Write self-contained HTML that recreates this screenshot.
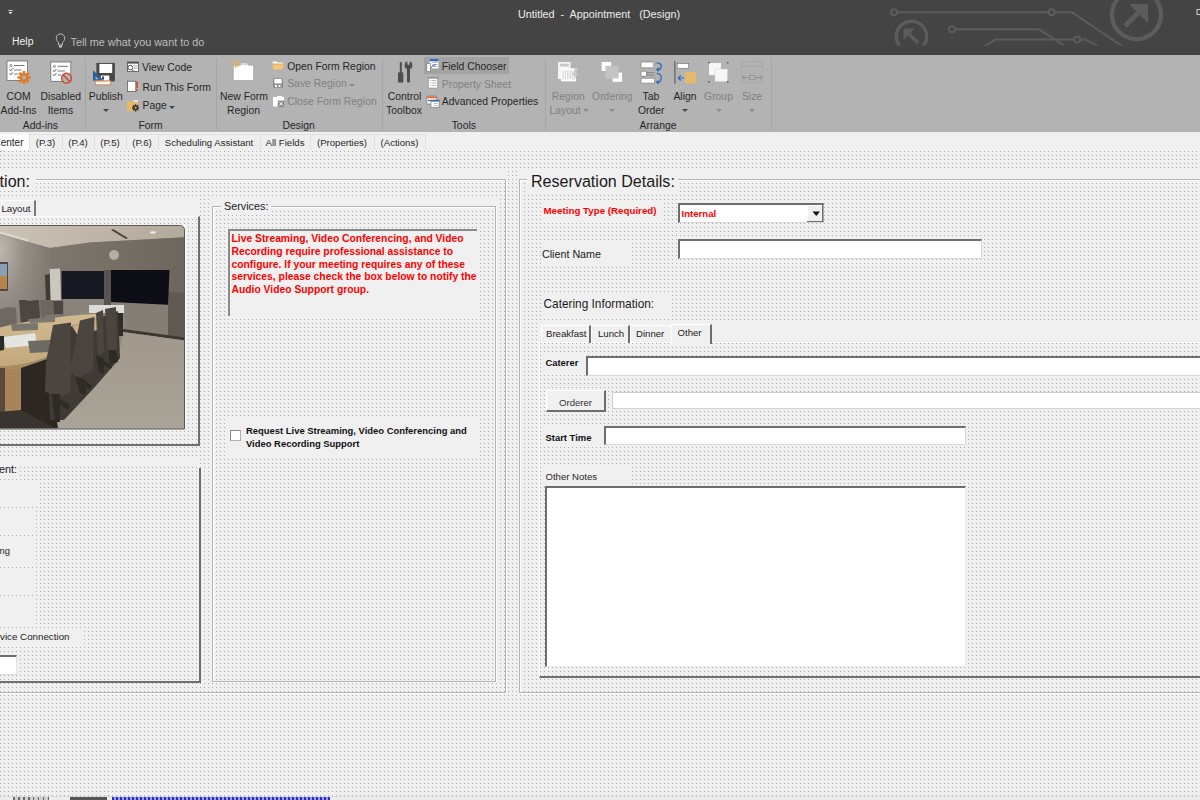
<!DOCTYPE html>
<html><head><meta charset="utf-8">
<style>
*{margin:0;padding:0;box-sizing:border-box}
html,body{width:1200px;height:800px;overflow:hidden;background:#f0f0f0;font-family:"Liberation Sans",sans-serif;position:relative}
.a{position:absolute}
.t{position:absolute;white-space:nowrap;line-height:1}
.dots{background-color:#f0f0f0;background-image:linear-gradient(90deg,#f0f0f0 3px,transparent 3px),linear-gradient(#f0f0f0 3px,#acacac 3px);background-size:4px 4px}
.solid{background:#f0f0f0}
.etch{border:1px solid #b4b4b4;box-shadow:1px 1px 0 #fff,inset 1px 1px 0 #fff}
.sunk{background:#fff;border-top:2px solid #6e6e6e;border-left:2px solid #6e6e6e;border-right:1px solid #e3e3e3;border-bottom:1px solid #e3e3e3}
.rb{color:#262626;font-size:10.4px}
.rbd{color:#808080;font-size:10.4px}
.sep{position:absolute;top:58px;width:1px;height:72px;background:#a5a5a5}
</style></head><body>
<div class="a" style="left:0;top:0;width:1200px;height:55px;background:#444"></div>
<svg class="a" style="left:0;top:0" width="1200" height="55" viewBox="0 0 1200 55">
<defs><clipPath id="cc"><rect x="0" y="0" width="1200" height="45.6"/></clipPath></defs>
<g clip-path="url(#cc)" fill="none" stroke="#5c5c5c" stroke-width="2">
<circle cx="894" cy="12.3" r="3"/>
<path d="M897 12.3H1048.5"/>
<circle cx="1051.5" cy="12.3" r="3"/>
<path d="M1054.5 12.3H1072L1122 46"/>
<circle cx="952" cy="29.3" r="3"/>
<path d="M955 29.3H1039L1065 46"/>
<path d="M985 46L995.5 39.5H1074.3"/>
<circle cx="1077.3" cy="39.5" r="3"/>
<path d="M1080.3 39.5H1085L1098 46"/>
<circle cx="911.5" cy="36.5" r="15.2" stroke-width="3.4"/>
<path d="M918 43L908 33" stroke-width="3.6"/><path d="M903.5 28.5H915L903.5 40Z" fill="#5c5c5c" stroke="none"/>
<circle cx="1136.5" cy="14.7" r="24.5" stroke-width="4.3"/>
<path d="M1125 26L1141 10" stroke-width="5"/><path d="M1129 4H1148V23Z" fill="#5c5c5c" stroke="none"/>
</g>
<rect x="1197" y="9.5" width="4" height="5" fill="none" stroke="#e0e0e0" stroke-width="0.9"/>
</svg>

<div class="t" style="left:518px;top:8.5px;font-size:10.8px;color:#ededed">Untitled&nbsp; -&nbsp; Appointment &nbsp; (Design)</div>
<div class="t" style="left:12px;top:37px;font-size:10.45px;color:#f2f2f2">Help</div>
<div class="t" style="left:70.5px;top:37px;font-size:10.85px;color:#bdbdbd">Tell me what you want to do</div>
<div class="a" style="left:0;top:55px;width:1200px;height:77px;background:#b3b3b3"></div>
<div class="t rb" style="left:-26.5px;top:91.7px;width:90px;text-align:center;">COM</div>
<div class="t rb" style="left:-26.5px;top:106.2px;width:90px;text-align:center;">Add-Ins</div>
<div class="t rb" style="left:15.8px;top:91.7px;width:90px;text-align:center;">Disabled</div>
<div class="t rb" style="left:15.4px;top:106.2px;width:90px;text-align:center;">Items</div>
<div class="t rb" style="left:60.8px;top:91.7px;width:90px;text-align:center;">Publish</div>
<svg class="a" style="left:102.5px;top:108.5px" width="6" height="4"><path d="M0 0H6L3 3Z" fill="#444"/></svg>
<div class="t rb" style="left:199.0px;top:91.7px;width:90px;text-align:center;">New Form</div>
<div class="t rb" style="left:198.5px;top:106.2px;width:90px;text-align:center;">Region</div>
<div class="t rb" style="left:359.5px;top:91.7px;width:90px;text-align:center;">Control</div>
<div class="t rb" style="left:359.0px;top:106.2px;width:90px;text-align:center;">Toolbox</div>
<div class="t rbd" style="left:523.3px;top:91.7px;width:90px;text-align:center;">Region</div>
<div class="t rbd" style="left:520.0px;top:106.2px;width:90px;text-align:center;">Layout</div>
<svg class="a" style="left:582.5px;top:108.5px" width="6" height="4"><path d="M0 0H6L3 3Z" fill="#8a8a8a"/></svg>
<div class="t rbd" style="left:567.3px;top:91.7px;width:90px;text-align:center;">Ordering</div>
<svg class="a" style="left:609px;top:108.5px" width="6" height="4"><path d="M0 0H6L3 3Z" fill="#8a8a8a"/></svg>
<div class="t rb" style="left:606.0px;top:91.7px;width:90px;text-align:center;">Tab</div>
<div class="t rb" style="left:606.3px;top:106.2px;width:90px;text-align:center;">Order</div>
<div class="t rb" style="left:640.0px;top:91.7px;width:90px;text-align:center;">Align</div>
<svg class="a" style="left:681.8px;top:108.5px" width="6" height="4"><path d="M0 0H6L3 3Z" fill="#444"/></svg>
<div class="t rbd" style="left:673.5px;top:91.7px;width:90px;text-align:center;">Group</div>
<svg class="a" style="left:715.5px;top:108.5px" width="6" height="4"><path d="M0 0H6L3 3Z" fill="#8a8a8a"/></svg>
<div class="t rbd" style="left:707.0px;top:91.7px;width:90px;text-align:center;">Size</div>
<svg class="a" style="left:749px;top:108.5px" width="6" height="4"><path d="M0 0H6L3 3Z" fill="#8a8a8a"/></svg>
<div class="t rb" style="left:-4.6px;top:121.0px;width:90px;text-align:center;">Add-ins</div>
<div class="t rb" style="left:105.5px;top:121.0px;width:90px;text-align:center;">Form</div>
<div class="t rb" style="left:253.7px;top:121.0px;width:90px;text-align:center;">Design</div>
<div class="t rb" style="left:418.8px;top:121.0px;width:90px;text-align:center;">Tools</div>
<div class="t rb" style="left:613.0px;top:121.0px;width:90px;text-align:center;">Arrange</div>
<div class="sep" style="left:85px"></div>
<div class="sep" style="left:216px"></div>
<div class="sep" style="left:382px"></div>
<div class="sep" style="left:545px"></div>
<div class="sep" style="left:771px"></div>
<div class="a" style="left:424px;top:57px;width:85px;height:17px;background:#a2a2a2"></div>
<div class="t rb" style="left:142.0px;top:63.0px;">View Code</div>
<div class="t rb" style="left:142.5px;top:82.7px;">Run This Form</div>
<div class="t rb" style="left:142.5px;top:101.2px;">Page</div>
<svg class="a" style="left:168.5px;top:105.5px" width="6" height="4"><path d="M0 0H6L3 3Z" fill="#444"/></svg>
<div class="t rb" style="left:287.2px;top:61.5px;">Open Form Region</div>
<div class="t rbd" style="left:287.2px;top:78.9px;">Save Region</div>
<svg class="a" style="left:348.5px;top:83.5px" width="6" height="4"><path d="M0 0H6L3 3Z" fill="#8a8a8a"/></svg>
<div class="t rbd" style="left:287.2px;top:97.0px;">Close Form Region</div>
<div class="t rb" style="left:441.8px;top:61.7px;">Field Chooser</div>
<div class="t rbd" style="left:441.8px;top:79.5px;">Property Sheet</div>
<div class="t rb" style="left:441.8px;top:97.2px;">Advanced Properties</div>
<svg class="a" style="left:0;top:0" width="800" height="135" viewBox="0 0 800 135">
<!-- COM Add-Ins -->
<rect x="7" y="61" width="20.5" height="19.5" fill="#fff" stroke="#6a6a6a" stroke-width="0.8"/>
<circle cx="11" cy="65.5" r="1" fill="none" stroke="#555" stroke-width="0.7"/>
<path d="M14 65.5H24.5M14 70H21.5M14 74H18" stroke="#555" stroke-width="0.8"/>
<path d="M9.5 69.5l1.2 1.4 2.2-2.6M9.5 73.5l1.2 1.4 2.2-2.6" stroke="#444" stroke-width="0.9" fill="none"/>
<g transform="translate(24,77.5)">
<circle r="4.6" fill="#e07a2a"/>
<path d="M-1.3-6.6h2.6v2.4h-2.6zM-1.3 4.2h2.6v2.4h-2.6zM-6.6-1.3h2.4v2.6h-2.4zM4.2-1.3h2.4v2.6h-2.4z" fill="#e07a2a"/>
<path d="M-1.3-6.6h2.6v2.4h-2.6zM-1.3 4.2h2.6v2.4h-2.6zM-6.6-1.3h2.4v2.6h-2.4zM4.2-1.3h2.4v2.6h-2.4z" fill="#e07a2a" transform="rotate(45)"/>
<circle r="2" fill="#b3b3b3"/>
</g>
<!-- Disabled Items -->
<rect x="50.8" y="62" width="20" height="19.3" fill="#fff" stroke="#6a6a6a" stroke-width="0.8"/>
<circle cx="54.5" cy="66.3" r="1" fill="none" stroke="#555" stroke-width="0.7"/>
<path d="M57.5 66.3H68M57.5 71H65M57.5 75H61" stroke="#555" stroke-width="0.8"/>
<path d="M53 70.3l1.2 1.4 2.2-2.6M53 74.3l1.2 1.4 2.2-2.6" stroke="#444" stroke-width="0.9" fill="none"/>
<circle cx="66.5" cy="78.2" r="4.9" fill="#b3b3b3" stroke="#d4452b" stroke-width="1.4"/>
<path d="M63.3 75l6.4 6.4" stroke="#d4452b" stroke-width="1.4"/>
<!-- Publish -->
<rect x="96.4" y="62.9" width="18.5" height="18.5" fill="#474747"/>
<rect x="99.4" y="63.9" width="12.8" height="9.1" fill="#fff"/>
<rect x="100.8" y="75.5" width="8.5" height="5.9" fill="#fff"/>
<rect x="102" y="76.5" width="2" height="3" fill="#474747"/>
<path d="M93 70.3V80.8H104Z" fill="#2b5f9e"/>
<path d="M95.5 76.2V79.2H98.5Z" fill="#b3b3b3"/>
<rect x="95.3" y="80.8" width="15" height="4" fill="#fff" stroke="#c9874a" stroke-width="0.9"/>
<path d="M97 81v1.5M99 81v1.5M101 81v1.5M103 81v1.5M105 81v1.5M107 81v1.5" stroke="#e07a2a" stroke-width="0.7"/>
<!-- View Code -->
<rect x="127.5" y="62" width="11" height="9.5" fill="#fff" stroke="#505050" stroke-width="0.8"/>
<rect x="127.5" y="62" width="11" height="1.6" fill="#505050"/>
<path d="M133.5 66H137.5M133.5 68H137.5" stroke="#888" stroke-width="0.7"/>
<circle cx="130.3" cy="67.6" r="2.3" fill="#fff" stroke="#404040" stroke-width="0.9"/>
<path d="M131.8 69.3l1.8 2" stroke="#404040" stroke-width="1"/>
<!-- Run This Form -->
<rect x="127.4" y="81.2" width="8.4" height="10.2" fill="#fff" stroke="#606060" stroke-width="0.8"/>
<rect x="136.2" y="81.5" width="1.6" height="6.5" fill="#d4452b"/>
<rect x="136.2" y="89.2" width="1.6" height="1.8" fill="#d4452b"/>
<!-- Page -->
<path d="M127 101.2h4l1 1h6v8.5h-11z" fill="#e8b865"/>
<rect x="133.5" y="100.3" width="4.5" height="1.3" fill="#fff"/>
<g transform="translate(135.6,107.8)"><circle r="2.4" fill="#333"/><path d="M-0.7-3.6h1.4v7.2h-1.4zM-3.6-0.7h7.2v1.4h-7.2z" fill="#333"/><path d="M-0.7-3.6h1.4v7.2h-1.4zM-3.6-0.7h7.2v1.4h-7.2z" fill="#333" transform="rotate(45)"/><circle r="1" fill="#e8b865"/></g>
<!-- New Form Region -->
<path d="M233.3 65.2h7l1.2-2.2h5.5l1.5 2.2h5.1v15.3h-20.3z" fill="#fff" stroke="#8f8f8f" stroke-width="0.5"/>
<path d="M240.5 65.2l1-2h5.5l1.5 2z" fill="#d9d9d9"/>
<g transform="translate(235.6,64)" stroke="#e8b35a" stroke-width="1.1"><path d="M0-4V4M-4 0H4M-2.8-2.8L2.8 2.8M-2.8 2.8L2.8-2.8"/></g>
<circle cx="235.6" cy="64" r="1.3" fill="#b3b3b3"/>
<!-- Open Form Region -->
<path d="M272.8 61.5h3.5l1 1h5.5v2h-10z" fill="#fff"/>
<path d="M272.8 63.5h11l-1.5 6h-9.5z" fill="#e8b565"/>
<path d="M273.5 65h10.8l-2 4.5h-9z" fill="#f0c77d"/>
<!-- Save Region (disabled) -->
<rect x="273" y="78.3" width="10" height="9.4" fill="#8a8a8a"/>
<rect x="274.3" y="79" width="7.4" height="4.5" fill="#fff"/>
<rect x="275" y="85" width="2" height="2" fill="#fff"/><rect x="278.5" y="85" width="2" height="2" fill="#fff"/>
<!-- Close Form Region (disabled) -->
<path d="M273 97h3.5l1-1h4l1 1h1.5v9.5H273z" fill="#fff"/>
<rect x="277.8" y="100.6" width="6.3" height="6.5" fill="#8a8a8a"/>
<path d="M279.3 102l3.3 3.6M282.6 102l-3.3 3.6" stroke="#fff" stroke-width="0.9"/>
<!-- Control Toolbox -->
<g fill="#4d4d4d">
<rect x="399.8" y="62" width="2" height="11" rx="0.8"/>
<rect x="398" y="72.3" width="5.3" height="10.3" rx="1.2"/>
<circle cx="408.5" cy="65.2" r="3.9"/><rect x="407" y="66" width="3" height="16.6" rx="1.4"/>
</g>
<path d="M407.3 60.5h2.4v3.8l-1.2 .8-1.2-.8z" fill="#b3b3b3"/>
<!-- Field Chooser -->
<rect x="429.5" y="59" width="9" height="9.5" fill="#fff"/>
<rect x="429.5" y="59" width="9" height="2.3" fill="#2e6bb5"/>
<path d="M432.5 62.5h5M432.5 64.5h5M432.5 66.5h5" stroke="#888" stroke-width="0.6"/>
<rect x="426.8" y="63.5" width="3.6" height="8" fill="#fff" stroke="#707070" stroke-width="0.6"/>
<path d="M430.5 68.3c1.5-2.5 3-3.5 5-3.5" stroke="#2e6bb5" stroke-width="1" fill="none"/>
<!-- Property Sheet (disabled) -->
<rect x="428.2" y="77.3" width="9.6" height="10.8" fill="#fff" stroke="#8a8a8a" stroke-width="0.7"/>
<rect x="428.2" y="77.3" width="9.6" height="1.3" fill="#8a8a8a"/>
<path d="M429.8 80.6h.9M429.8 83h.9M429.8 85.4h.9M431.6 80.6h5M431.6 83h5M431.6 85.4h5" stroke="#9a9a9a" stroke-width="0.7"/>
<!-- Advanced Properties -->
<rect x="427" y="96" width="9.5" height="8" fill="#fff" stroke="#707070" stroke-width="0.6"/>
<rect x="427" y="96.3" width="9.5" height="2" fill="#e06a2a"/>
<path d="M428 100.5h3" stroke="#2e6bb5" stroke-width="1.2"/>
<rect x="431" y="100" width="8.2" height="7.4" fill="#fff" stroke="#707070" stroke-width="0.6"/>
<rect x="431" y="100" width="8.2" height="1.6" fill="#2e6bb5"/>
<path d="M434 103.5h4M434 105.5h4" stroke="#999" stroke-width="0.6"/>
<!-- Region Layout (disabled) -->
<rect x="558" y="62" width="12.5" height="17" fill="#f4f4f4"/>
<rect x="559.8" y="63.8" width="9" height="2.6" fill="#c8c8c8"/>
<rect x="561" y="68.3" width="15" height="13" fill="#fff"/>
<path d="M563 70.3v9M565.3 70.3v9M567.8 70.3v9M570 70.3v9M572.2 70.3v9" stroke="#bdbdbd" stroke-width="0.8"/>
<path d="M575 68l3.5 0-2.8 5h2.8l-5.5 8.5 1.5-6h-2.2z" fill="#c9c9c9"/>
<!-- Ordering (disabled) -->
<rect x="601.7" y="62" width="9.5" height="9" fill="#fff"/>
<rect x="612.6" y="72.6" width="9.5" height="9.2" fill="#fff"/>
<rect x="605.4" y="65.8" width="13.2" height="12.6" fill="#c4c4c4"/>
<!-- Tab Order -->
<rect x="641" y="62" width="13.5" height="5.8" rx="0.8" fill="#fff" stroke="#6a6a6a" stroke-width="0.6"/>
<rect x="652.3" y="62.6" width="1.6" height="4.6" fill="#b9d5ef"/>
<rect x="641" y="71.3" width="5.5" height="5" rx="0.8" fill="#fff" stroke="#6a6a6a" stroke-width="0.6"/>
<path d="M646.5 72.6h8M646.5 75h8" stroke="#7a7a7a" stroke-width="0.8"/>
<rect x="641" y="78.2" width="13.5" height="5" rx="0.8" fill="#fff" stroke="#6a6a6a" stroke-width="0.6"/>
<path d="M656.5 62.8Q661.2 62.8 661.2 66.2Q661.2 69.3 658.5 69.6" stroke="#2e6bb5" stroke-width="1.3" fill="none"/>
<path d="M655.5 69.6L658.8 67.2V72Z" fill="#2e6bb5"/>
<path d="M656.5 73.3Q661.2 73.3 661.2 77.5Q661.2 81.8 658.5 82.2" stroke="#2e6bb5" stroke-width="1.3" fill="none"/>
<path d="M655.5 82.2L658.8 79.8V84.6Z" fill="#2e6bb5"/>
<!-- Align -->
<rect x="674.2" y="61" width="1.3" height="22.7" fill="#666"/>
<rect x="677.2" y="63.5" width="11.5" height="5" fill="#fff" stroke="#6a6a6a" stroke-width="0.6"/>
<rect x="685" y="72" width="11" height="11.5" fill="#e5b86a"/>
<path d="M684 78H678.3M680.8 75.5L678.3 78l2.5 2.5" stroke="#2e6bb5" stroke-width="1.2" fill="none"/>
<!-- Group (disabled) -->
<rect x="709" y="63" width="12" height="12" fill="#f6f6f6"/>
<rect x="715" y="69" width="12.5" height="12.5" fill="#f6f6f6" stroke="#c8c8c8" stroke-width="0.4"/>
<rect x="708.3" y="62" width="1.5" height="1.5" fill="#555"/><rect x="727" y="62" width="1.5" height="1.5" fill="#555"/>
<rect x="708.3" y="81" width="1.5" height="1.5" fill="#555"/><rect x="727" y="81" width="1.5" height="1.5" fill="#555"/>
<!-- Size (disabled) -->
<rect x="741.5" y="61.5" width="21" height="21" fill="none" stroke="#9c9c9c" stroke-width="0.8" stroke-dasharray="1.2 1"/>
<path d="M741.5 66.3h21" stroke="#9c9c9c" stroke-width="0.8"/>
<rect x="749.5" y="75.3" width="5.5" height="4.5" fill="none" stroke="#8f8f8f" stroke-width="0.8"/>
<path d="M742.3 77.5h6M744.5 75.3l-2.2 2.2 2.2 2.2M756 77.5h6M759.8 75.3l2.2 2.2-2.2 2.2" stroke="#8f8f8f" stroke-width="1" fill="none"/>
<!-- title bar glyph + lightbulb -->
<path d="M8.5 10.5h4" stroke="#eee" stroke-width="0.9"/>
<path d="M8.5 12h4l-2 2.2z" fill="#eee"/>
<path d="M58.5 45v-2.5c-1.5-1.2-2.2-2.6-2.2-4.3 0-2.5 1.9-4.3 4.2-4.3s4.2 1.8 4.2 4.3c0 1.7-.7 3.1-2.2 4.3V45z" fill="none" stroke="#c8c8c8" stroke-width="0.9"/>
<rect x="59" y="45.5" width="3" height="2" fill="#c8c8c8"/>
</svg>

<div class="a" style="left:0;top:132px;width:1200px;height:19px;background:#f0f0f0"></div>
<div class="a" style="left:0px;top:134px;width:29px;height:16px;background:#fff"></div>
<div class="t" style="left:-100px;top:138px;width:123.5px;font-size:10px;color:#262626;text-align:right">Center</div>
<div class="a" style="left:29px;top:134px;width:34px;height:16px;background:#efefef;border:1px solid #e0e0e0;border-bottom:none"></div>
<div class="t" style="left:29px;top:138px;width:33px;font-size:9.6px;color:#262626;text-align:center">(P.3)</div>
<div class="a" style="left:62px;top:134px;width:33px;height:16px;background:#efefef;border:1px solid #e0e0e0;border-bottom:none"></div>
<div class="t" style="left:62px;top:138px;width:32px;font-size:9.6px;color:#262626;text-align:center">(P.4)</div>
<div class="a" style="left:94px;top:134px;width:33px;height:16px;background:#efefef;border:1px solid #e0e0e0;border-bottom:none"></div>
<div class="t" style="left:94px;top:138px;width:32px;font-size:9.6px;color:#262626;text-align:center">(P.5)</div>
<div class="a" style="left:126px;top:134px;width:33px;height:16px;background:#efefef;border:1px solid #e0e0e0;border-bottom:none"></div>
<div class="t" style="left:126px;top:138px;width:32px;font-size:9.6px;color:#262626;text-align:center">(P.6)</div>
<div class="a" style="left:158px;top:134px;width:103px;height:16px;background:#efefef;border:1px solid #e0e0e0;border-bottom:none"></div>
<div class="t" style="left:158px;top:138px;width:102px;font-size:9.6px;color:#262626;text-align:center">Scheduling Assistant</div>
<div class="a" style="left:260px;top:134px;width:51px;height:16px;background:#efefef;border:1px solid #e0e0e0;border-bottom:none"></div>
<div class="t" style="left:260px;top:138px;width:50px;font-size:9.6px;color:#262626;text-align:center">All Fields</div>
<div class="a" style="left:310px;top:134px;width:65px;height:16px;background:#efefef;border:1px solid #e0e0e0;border-bottom:none"></div>
<div class="t" style="left:310px;top:138px;width:64px;font-size:9.6px;color:#262626;text-align:center">(Properties)</div>
<div class="a" style="left:374px;top:134px;width:52px;height:16px;background:#efefef;border:1px solid #e0e0e0;border-bottom:none"></div>
<div class="t" style="left:374px;top:138px;width:51px;font-size:9.6px;color:#262626;text-align:center">(Actions)</div>
<div class="a dots" style="left:0;top:151px;width:1200px;height:646px;background-position:1px 1px"></div>
<!-- LEFT FRAME -->
<div class="a solid" style="left:0;top:169px;width:507px;height:10px"></div>
<div class="a solid" style="left:519px;top:169px;width:681px;height:10px"></div>
<div class="a solid" style="left:212px;top:199px;width:285px;height:7px"></div>
<div class="a etch" style="left:-10px;top:179px;width:516px;height:514px;background:transparent"></div>
<div class="a solid" style="left:0;top:170px;width:36px;height:20px"></div>
<div class="t" style="left:-100px;top:172.5px;width:130px;text-align:right;font-size:16.09px;color:#1a1a1a">ation:</div>
<!-- Layout tab control -->
<div class="a solid" style="left:0;top:198px;width:200px;height:18px"></div>
<div class="a" style="left:-10px;top:200px;width:46px;height:17px;border-top:1px solid #fff;border-right:2px solid #7a7a7a;background:#f0f0f0"></div>
<div class="t" style="left:-100px;top:204px;width:130.5px;text-align:right;font-size:9.7px;color:#1a1a1a">Layout</div>
<div class="a" style="left:-10px;top:216px;width:210px;height:230px;border-top:1px solid #fff;border-right:2px solid #6e6e6e;border-bottom:2px solid #6e6e6e;background:transparent"></div>
<!-- photo -->
<div class="a" style="left:178px;top:225px;width:7px;height:7px;background:#fff"></div>
<svg class="a" style="left:0;top:225px" width="185" height="205" viewBox="0 225 185 205">
<defs>
<linearGradient id="ceil" x1="0" y1="0" x2="1" y2="0"><stop offset="0" stop-color="#cbc3b7"/><stop offset="1" stop-color="#b3a99a"/></linearGradient>
<radialGradient id="lwall" cx="0.05" cy="0.15" r="0.9"><stop offset="0" stop-color="#bdb6ad"/><stop offset="0.5" stop-color="#958e86"/><stop offset="1" stop-color="#817b73"/></radialGradient>
<linearGradient id="bwall" x1="0" y1="0" x2="1" y2="0"><stop offset="0" stop-color="#7d776e"/><stop offset="1" stop-color="#6c665d"/></linearGradient>
<linearGradient id="carpet" x1="0" y1="0" x2="0" y2="1"><stop offset="0" stop-color="#a0988c"/><stop offset="1" stop-color="#aba498"/></linearGradient>
<linearGradient id="tbl" x1="0" y1="0" x2="0" y2="1"><stop offset="0" stop-color="#d2b990"/><stop offset="1" stop-color="#c4a87d"/></linearGradient>
<clipPath id="pc"><path d="M0 225.5H179.5Q184.5 225.5 184.5 230.5V429H0Z"/></clipPath>
</defs>
<g clip-path="url(#pc)">
<rect x="-2" y="223" width="190" height="210" fill="#8a847c"/>
<path d="M-2 223H188V237L90 242.5L50 248L0 234Z" fill="url(#ceil)"/>
<path d="M0 231.5L28 239.5L28 241.5L0 233.5Z" fill="#ddd8d0"/>
<path d="M113 229L128 238L126 239L111 230Z" fill="#4a4640"/>
<ellipse cx="153" cy="232.5" rx="3" ry="1.3" fill="#efe9df"/>
<path d="M-2 234L50 248V332L-2 340Z" fill="url(#lwall)"/>
<path d="M50 248L90 242.5L188 237V335L125 330L50 318Z" fill="url(#bwall)"/>
<path d="M64 299H125V330L64 318Z" fill="#8a8379"/>
<path d="M125 300L168 292V336L125 330Z" fill="#857e74"/>
<path d="M168 292L186 293V338L168 336Z" fill="#5f5a52"/>
<path d="M123 329L188 338V341L123 332Z" fill="#3c3731"/>
<path d="M123 332L188 341V433H55L62 400L118 358Z" fill="url(#carpet)"/>
<rect x="-1" y="262" width="9" height="29" fill="#4b4a48"/>
<rect x="0" y="264" width="7" height="12" fill="#8aa0b4"/>
<rect x="0" y="276" width="7" height="13" fill="#b8844c"/>
<circle cx="114" cy="255" r="5" fill="#b5aea4"/>
<path d="M45 275L50 274L52 301L46 301Z" fill="#3e3a34"/>
<path d="M49.7 269L60 268.5L61 300L50.5 300.5Z" fill="#cbc7bf"/>
<path d="M61.6 271H104V299H61.6Z" fill="#161822"/>
<path d="M104 270H111V305H104Z" fill="#59544d"/>
<path d="M111 270H169.5L168 304.8L111 302Z" fill="#0c0d15"/>
<path d="M89 305H124V313H89Z" fill="#dcdcda"/>
<path d="M116 313H123V336H116Z" fill="#2f2b26"/>
<!-- back chairs -->
<path d="M0 309Q8 306 16 308L17 330L0 336Z" fill="#6e6862"/>
<g fill="#4b4641">
<path d="M19 300L27 300L28 322L21 324Z"/>
<path d="M26 301L39 300L40 318L28 321Z"/>
<path d="M53 301L63 301L63 314L54 315Z"/>
</g>
<path d="M40 300L53 300L54 316L41 318Z" fill="#6d675f"/>
<!-- table -->
<path d="M-2 328Q40 317 95 314L99 318L72 326L48 356Q30 365 0 366.5H-2Z" fill="url(#tbl)"/>
<path d="M0 366.5Q30 365 47 357L48 362Q30 370 0 371Z" fill="#a88c62"/>
<path d="M-2 368H5V420H-2Z" fill="#5a4a3a"/>
<path d="M5 369H21V412L5 416Z" fill="#a8845a"/>
<path d="M21 368L47 359L58 428H21Z" fill="#2c2722"/>
<path d="M-2 412L21 410L55 428H-2Z" fill="#3a3430"/>
<path d="M11 324L38 323L38 330L12 331Z" fill="#7a776f"/>
<path d="M28 319L55 317L55 322L30 323Z" fill="#7c7870"/>
<path d="M45 315L60 314L60 317L46 318Z" fill="#7c7870"/>
<path d="M3 337L35 333L37 345L6 348Z" fill="#e4e4e2"/>
<path d="M28 341L50 340L48 352L30 353Z" fill="#6d6a64"/>
<path d="M-2 336L4 336L4 350L-2 351Z" fill="#2a2a2a"/>
<path d="M47 357L72 326L99 318L118 311L120 358L94 388L64 420L50 420Z" fill="#3f3a35"/>
<path d="M72 326L99 318L97 330L78 336Z" fill="#c9ae84"/>
<!-- front chairs -->
<g fill="#4a453f">
<path d="M53 325L71 322.5L71 392L62 396L45 392L46 362Z"/>
<path d="M80 320.5L94.5 317L93 370L78 378L70 370Z"/>
<path d="M96 313L103 310L104 352L98 356Z"/>
<path d="M105 309L116 307L117 350L108 355Z"/>
</g>
<g fill="#2e2a26">
<path d="M52 394L60 394L60 422L55 422Z"/>
<path d="M58 398L70 405L68 410L57 402Z"/>
<path d="M75 376L86 380L86 395L80 393Z"/>
<path d="M84 380L92 386L90 390L83 384Z"/>
<path d="M96 355L104 358L104 374L99 372Z"/>
<path d="M103 360L112 366L111 369L102 364Z"/>
<path d="M108 350L116 350L118 362L110 364Z"/>
<path d="M112 353L119 358L118 360L111 356Z"/>
</g>
</g>
<path d="M0 225.5H179.5Q184.5 225.5 184.5 230.5V429H0" fill="none" stroke="#5a5a5a" stroke-width="1"/>
</svg>
<!-- Equipment frame -->
<div class="a" style="left:-10px;top:468px;width:211px;height:215px;border-right:2px solid #6e6e6e;border-bottom:2px solid #6e6e6e;background:transparent"></div>
<div class="a solid" style="left:0;top:459px;width:200px;height:8px"></div><div class="a solid" style="left:0;top:461px;width:19px;height:16px"></div>
<div class="t" style="left:-100px;top:464px;width:117px;text-align:right;font-size:10.8px;color:#1a1a1a">ipment:</div>
<div class="a solid" style="left:0;top:482px;width:37.5px;height:23px"></div>
<div class="a solid" style="left:0;top:511px;width:34px;height:23px"></div>
<div class="a solid" style="left:0;top:539px;width:34px;height:25px"></div>
<div class="a solid" style="left:0;top:570px;width:34px;height:25px"></div>
<div class="a solid" style="left:0;top:599px;width:34px;height:25px"></div>
<div class="t" style="left:-100px;top:546px;width:110px;text-align:right;font-size:9.4px;color:#1a1a1a">ing</div>
<div class="a solid" style="left:0;top:629px;width:82px;height:18px"></div>
<div class="t" style="left:-100px;top:632px;width:169.5px;text-align:right;font-size:9.77px;color:#1a1a1a">Device Connection</div>
<div class="a sunk" style="left:-10px;top:655px;width:27px;height:20px"></div>
<!-- Services frame -->
<div class="a etch" style="left:212px;top:206px;width:284px;height:476px;background:transparent"></div>
<div class="a solid" style="left:221px;top:199px;width:50px;height:15px"></div>
<div class="t" style="left:224px;top:201px;font-size:10.8px;color:#1a1a1a">Services:</div>
<div class="a" style="left:228px;top:229px;width:249px;height:87px;background:#f0f0f0;border-top:2px solid #8a8a8a;border-left:2px solid #8a8a8a"></div>
<div class="a" style="left:231.5px;top:233px;width:250px;font-size:10.33px;line-height:12.8px;font-weight:bold;color:#ff0000">Live Streaming, Video Conferencing, and Video<br>Recording require professional assistance to<br>configure. If your meeting requires any of these<br>services, please check the box below to notify the<br>Audio Video Support group.</div>
<div class="a solid" style="left:228px;top:416px;width:249px;height:42px"></div>
<div class="a" style="left:230px;top:430px;width:11px;height:11px;background:#fff;border:1px solid #b0b0b0;border-top-color:#8a8a8a;border-left-color:#8a8a8a"></div>
<div class="a" style="left:246px;top:425px;font-size:9.43px;line-height:12.5px;font-weight:bold;color:#111">Request Live Streaming, Video Conferencing and<br>Video Recording Support</div>
<!-- RIGHT FRAME -->
<div class="a etch" style="left:519px;top:179px;width:700px;height:514px;background:transparent"></div>
<div class="a solid" style="left:527px;top:169px;width:151px;height:24px"></div>
<div class="t" style="left:531px;top:172.5px;font-size:16.09px;color:#1a1a1a">Reservation Details:</div>
<div class="a solid" style="left:541px;top:200px;width:122px;height:22px"></div>
<div class="t" style="left:543.5px;top:206px;font-size:9.75px;font-weight:bold;color:#ff0000">Meeting Type (Required)</div>
<div class="a" style="left:677.5px;top:203px;width:146.5px;height:20px;background:#fff;border-top:2px solid #6e6e6e;border-left:2px solid #6e6e6e;border-right:1px solid #a8a8a8;border-bottom:1px solid #d8d8d8"></div>
<div class="t" style="left:681.5px;top:209px;font-size:9.6px;font-weight:bold;color:#ff0000">Internal</div>
<div class="a" style="left:807px;top:205px;width:15.5px;height:16.5px;background:#f0f0f0;border-right:1.5px solid #6e6e6e;border-bottom:1.5px solid #6e6e6e;box-shadow:inset 1px 1px 0 #fff"></div>
<svg class="a" style="left:811.5px;top:211px" width="9" height="6"><path d="M0.5 0.5H8L4.25 5Z" fill="#111"/></svg>
<div class="a solid" style="left:541px;top:243px;width:89px;height:23px"></div>
<div class="t" style="left:542px;top:249px;font-size:10.72px;color:#1a1a1a">Client Name</div>
<div class="a" style="left:677.5px;top:238.5px;width:304px;height:20px;background:#fff;border-top:2px solid #6e6e6e;border-left:2px solid #6e6e6e;border-right:1px solid #d8d8d8;border-bottom:1px solid #d8d8d8"></div>
<div class="a solid" style="left:541px;top:294px;width:131px;height:24px"></div>
<div class="t" style="left:543.5px;top:299px;font-size:11.85px;color:#1a1a1a">Catering Information:</div>
<!-- catering tab control -->
<div class="a solid" style="left:539px;top:322px;width:661px;height:21px"></div>
<div class="a" style="left:539px;top:342px;width:700px;height:336px;border-top:1px solid #fff;border-left:1px solid #fff;border-bottom:2px solid #6e6e6e;background:transparent"></div>
<div class="a" style="left:541px;top:325px;width:50px;height:18px;border-top:1px solid #fff;border-left:1px solid #fff;border-right:2px solid #6e6e6e"></div>
<div class="t" style="left:546px;top:329px;font-size:9.6px;color:#1a1a1a">Breakfast</div>
<div class="a" style="left:591px;top:325px;width:39px;height:18px;border-top:1px solid #fff;border-left:1px solid #fff;border-right:2px solid #6e6e6e"></div>
<div class="t" style="left:598px;top:329px;font-size:9.6px;color:#1a1a1a">Lunch</div>
<div class="a" style="left:630px;top:325px;width:41px;height:18px;border-top:1px solid #fff;border-left:1px solid #fff"></div>
<div class="t" style="left:636px;top:329px;font-size:9.6px;color:#1a1a1a">Dinner</div>
<div class="a" style="left:671px;top:324px;width:41px;height:20px;background:#f0f0f0;border-top:1px solid #fff;border-left:1px solid #fff;border-right:2px solid #6e6e6e"></div>
<div class="t" style="left:677.5px;top:328px;font-size:9.6px;color:#1a1a1a">Other</div>
<div class="a solid" style="left:543px;top:354px;width:42px;height:21px"></div>
<div class="t" style="left:545.5px;top:358.5px;font-size:9.37px;font-weight:bold;color:#111">Caterer</div>
<div class="a" style="left:586px;top:356px;width:640px;height:20px;background:#fff;border-top:2px solid #6e6e6e;border-left:2px solid #6e6e6e;border-bottom:1px solid #d8d8d8"></div>
<div class="a" style="left:545.5px;top:389.5px;width:60.5px;height:22px;background:#f0f0f0;border-top:1px solid #fff;border-left:1px solid #fff;border-right:2px solid #6e6e6e;border-bottom:2px solid #6e6e6e"></div>
<div class="t" style="left:559px;top:397.5px;font-size:9.6px;color:#333">Orderer</div>
<div class="a" style="left:612px;top:391.5px;width:640px;height:17px;background:#fff;border:1px solid #d0d0d0"></div>
<div class="a solid" style="left:543px;top:426px;width:58px;height:21px"></div>
<div class="t" style="left:545.5px;top:432.5px;font-size:9.44px;font-weight:bold;color:#111">Start Time</div>
<div class="a" style="left:603.5px;top:425.5px;width:362.5px;height:19px;background:#fff;border-top:2px solid #6e6e6e;border-left:2px solid #6e6e6e;border-right:1px solid #d8d8d8;border-bottom:1px solid #d8d8d8"></div>
<div class="a solid" style="left:543px;top:466px;width:89px;height:20px"></div>
<div class="t" style="left:545.5px;top:471.5px;font-size:9.55px;color:#262626">Other Notes</div>
<div class="a" style="left:545px;top:486px;width:421px;height:181px;background:#fff;border-top:2px solid #6e6e6e;border-left:2px solid #6e6e6e;border-right:1px solid #ececec;border-bottom:1px solid #ececec"></div>
<!-- bottom strip -->
<div class="a" style="left:0;top:796px;width:1200px;height:1px;background:#dcdcdc"></div>
<div class="a" style="left:0;top:797px;width:1200px;height:3px;background:#ececec"></div>
<div class="a" style="left:13px;top:797px;width:36px;height:3px;background:repeating-linear-gradient(90deg,#6a6a6a 0 1.5px,#d0d0d0 1.5px 5px)"></div>
<div class="a" style="left:70px;top:797px;width:37px;height:3px;background:#555"></div>
<div class="a" style="left:112px;top:797px;width:218px;height:3px;background:repeating-linear-gradient(90deg,#2a2ac8 0 2px,#9a9ae6 2px 4px)"></div>

</body></html>
